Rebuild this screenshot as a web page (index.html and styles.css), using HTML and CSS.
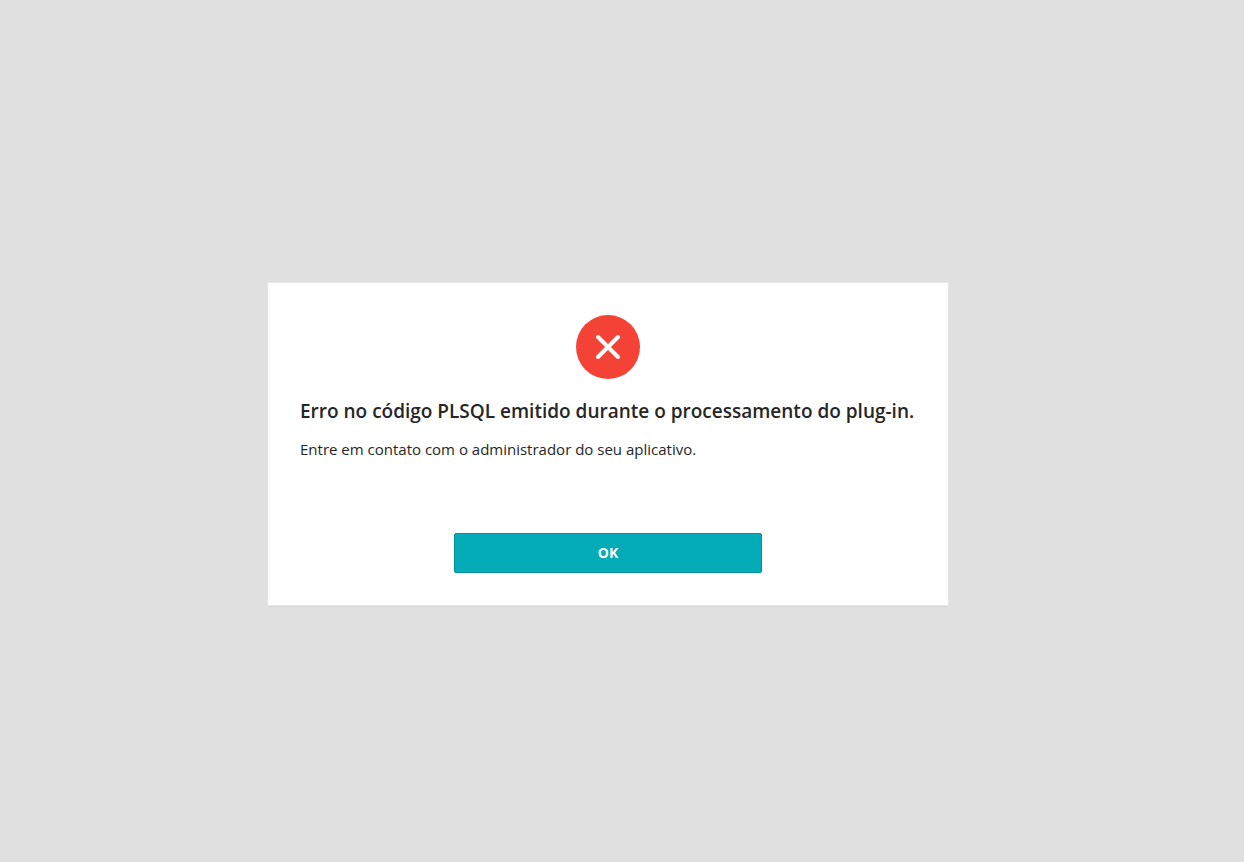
FILE: index.html
```
<!DOCTYPE html>
<html lang="pt-BR">
<head>
    <meta charset="UTF-8">
    <meta name="viewport" content="width=device-width, initial-scale=1.0">
    <title>Erro</title>
    <link rel="stylesheet" href="styles.css">
</head>
<body>
    <main class="error-page">
        <div class="alert">
            <div class="alert-icon">
                <svg viewBox="0 0 64 64" aria-hidden="true">
                    <circle cx="32" cy="32" r="32" fill="#f44336"/>
                    <path d="M22 22l20 20M42 22l-20 20" fill="none" stroke="#fff" stroke-width="4" stroke-linecap="round"/>
                </svg>
            </div>
            <div class="alert-body">
                <h1 class="alert-title">Erro no código PLSQL emitido durante o processamento do plug-in.</h1>
                <p class="alert-text">Entre em contato com o administrador do seu aplicativo.</p>
            </div>
            <div class="alert-buttons">
                <button type="button" class="button-ok" onclick="history.back()">OK</button>
            </div>
        </div>
    </main>
</body>
</html>
```
FILE: styles.css
```
* {
    box-sizing: border-box;
}

body {
    margin: 0;
    background: #e0e0e0;
    color: #262626;
    font-family: 'Segoe UI', 'Open Sans', 'Noto Sans', sans-serif;
}

.error-page {
    display: flex;
    align-items: center;
    justify-content: center;
    min-height: 100vh;
    padding: 26px 28px 0 0;
}

.alert {
    width: 100%;
    max-width: 680px;
    padding: 32px;
    background: #fff;
    box-shadow: 0 0 0 1px #e6e6e6, 0 2px 2px rgba(0, 0, 0, 0.04);
}

.alert-icon svg {
    display: block;
    width: 64px;
    height: 64px;
    margin: 0 auto 16px;
}

.alert-title {
    margin: 0 0 8px;
    font-size: 19px;
    font-weight: 600;
    line-height: 32px;
}

.alert-text {
    margin: 0;
    font-size: 15px;
    line-height: 28px;
}

.alert-buttons {
    margin-top: 70px;
    text-align: center;
}

.button-ok {
    width: 50%;
    height: 40px;
    padding: 0 8px 2px;
    border: 1px solid #00959d;
    border-radius: 2px;
    background: #02abb5;
    color: #fff;
    font-family: inherit;
    font-size: 14px;
    font-weight: 700;
    cursor: pointer;
}
```
